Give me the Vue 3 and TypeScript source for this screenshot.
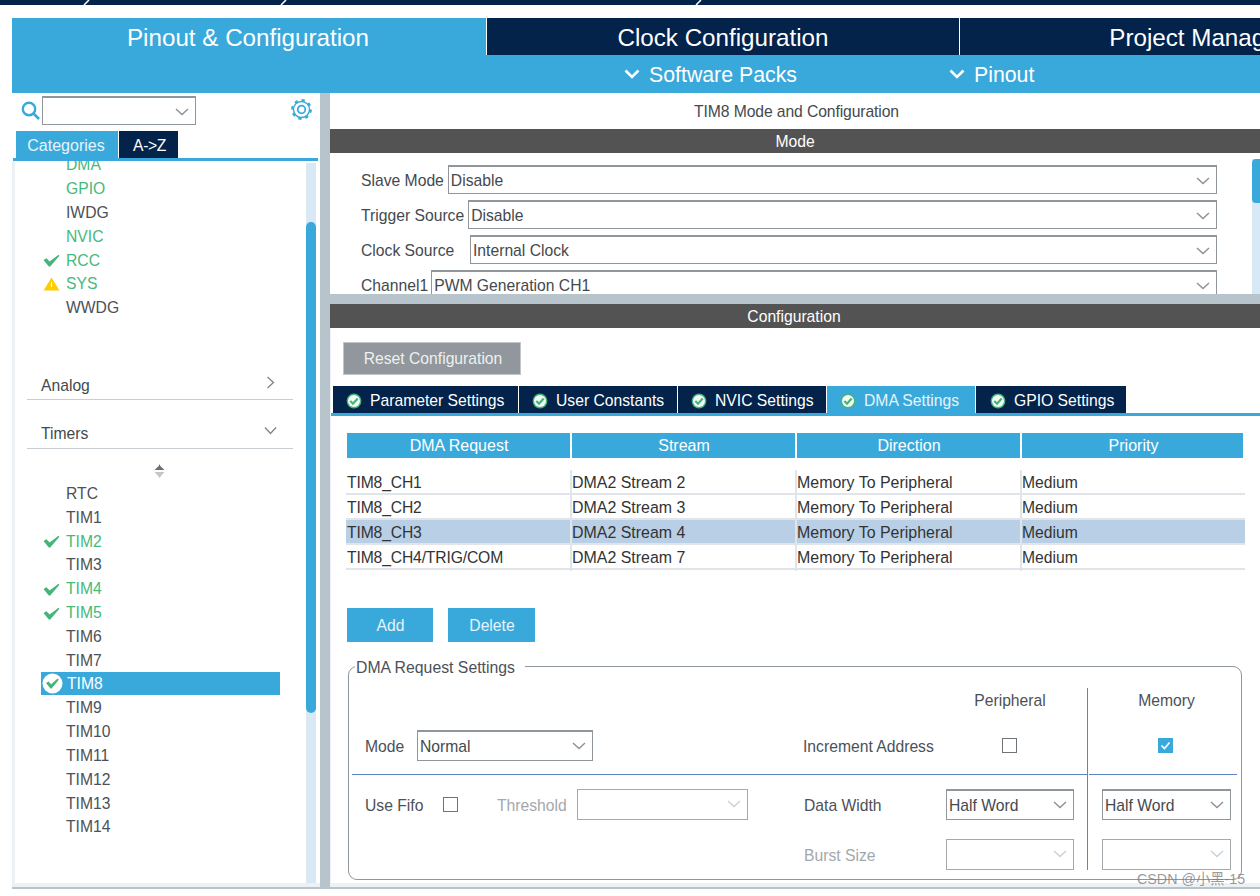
<script setup lang="ts">
interface Item { name: string; state?: 'ok' | 'warn' | 'sel'; green?: boolean }
const systemItems: Item[] = [
  { name: 'DMA', green: true }, { name: 'GPIO', green: true }, { name: 'IWDG' },
  { name: 'NVIC', green: true }, { name: 'RCC', green: true, state: 'ok' },
  { name: 'SYS', green: true, state: 'warn' }, { name: 'WWDG' }
]
const timerItems: Item[] = [
  { name: 'RTC' }, { name: 'TIM1' }, { name: 'TIM2', green: true, state: 'ok' }, { name: 'TIM3' },
  { name: 'TIM4', green: true, state: 'ok' }, { name: 'TIM5', green: true, state: 'ok' },
  { name: 'TIM6' }, { name: 'TIM7' }, { name: 'TIM8', state: 'sel' }, { name: 'TIM9' },
  { name: 'TIM10' }, { name: 'TIM11' }, { name: 'TIM12' }, { name: 'TIM13' }, { name: 'TIM14' }
]
const modeRows = [
  { label: 'Slave Mode', value: 'Disable', cls: '' },
  { label: 'Trigger Source', value: 'Disable', cls: '' },
  { label: 'Clock Source', value: 'Internal Clock', cls: 'wide' },
  { label: 'Channel1', value: 'PWM Generation CH1', cls: 'tight' }
]
const configTabs = [
  { name: 'Parameter Settings', w: 185 }, { name: 'User Constants', w: 158 },
  { name: 'NVIC Settings', w: 148 }, { name: 'DMA Settings', w: 148, active: true },
  { name: 'GPIO Settings', w: 150 }
]
const dmaRows = [
  { req: 'TIM8_CH1', stream: 'DMA2 Stream 2' },
  { req: 'TIM8_CH2', stream: 'DMA2 Stream 3' },
  { req: 'TIM8_CH3', stream: 'DMA2 Stream 4', selected: true },
  { req: 'TIM8_CH4/TRIG/COM', stream: 'DMA2 Stream 7' }
]
</script>

<template>
  <div class="page">
    <div class="crumbs">
      <svg class="crumb c1" width="8" height="5" viewBox="0 0 8 5"><path d="M1 5 L6 0" stroke="#fff" stroke-width="1.5" /></svg>
      <svg class="crumb c2" width="8" height="5" viewBox="0 0 8 5"><path d="M1 5 L6 0" stroke="#fff" stroke-width="1.5" /></svg>
      <svg class="crumb c3" width="8" height="5" viewBox="0 0 8 5"><path d="M1 5 L6 0" stroke="#fff" stroke-width="1.5" /></svg>
    </div>

    <div class="shell">
      <div class="main-tabs">
        <div class="main-tab active">Pinout &amp; Configuration</div>
        <div class="main-tab">Clock Configuration</div>
        <div class="main-tab">Project Manager</div>
      </div>
      <div class="sub-band">
        <div class="sub-item first">
          <svg width="16" height="10" viewBox="0 0 16 10"><path d="M1.5 1.5 L8 8 L14.5 1.5" fill="none" stroke="#fff" stroke-width="2.6" /></svg>
          <span>Software Packs</span>
        </div>
        <div class="sub-item second">
          <svg width="16" height="10" viewBox="0 0 16 10"><path d="M1.5 1.5 L8 8 L14.5 1.5" fill="none" stroke="#fff" stroke-width="2.6" /></svg>
          <span>Pinout</span>
        </div>
      </div>

      <div class="workspace">
        <aside class="sidebar">
          <div class="search-row">
            <svg class="search-ico" width="19" height="19" viewBox="0 0 19 19">
              <circle cx="8" cy="8" r="6.2" fill="none" stroke="#39a9dc" stroke-width="2.4" />
              <path d="M12.5 12.5 L18 18" stroke="#39a9dc" stroke-width="2.6" />
            </svg>
            <div class="select search-select">
              <svg class="chev" width="14" height="8" viewBox="0 0 14 8"><path d="M1 1 L7 6.5 L13 1" fill="none" stroke="#8b9196" stroke-width="1.4" /></svg>
            </div>
            <svg class="gear" width="21" height="21" viewBox="0 0 21 21">
              <circle cx="10.5" cy="10.5" r="8" fill="none" stroke="#39a9dc" stroke-width="1.4" />
              <circle cx="10.5" cy="10.5" r="9.2" fill="none" stroke="#39a9dc" stroke-width="2.4" stroke-dasharray="3.2 4" />
              <circle cx="10.5" cy="10.5" r="3.8" fill="none" stroke="#39a9dc" stroke-width="1.8" />
            </svg>
          </div>
          <div class="side-tabs">
            <div class="side-tab on">Categories</div>
            <div class="side-tab az">A-&gt;Z</div>
          </div>
          <div class="side-body">
            <div class="side-list">
              <div class="items first-items">
                <div v-for="it in systemItems" :key="it.name" class="item" :class="{ green: it.green }">
                  <span class="slot">
                    <svg v-if="it.state === 'ok'" width="17" height="13" viewBox="0 0 17 13"><path d="M0.5 6 L3.5 4.3 L6.6 7.4 L15.6 0.8 L16.4 1.8 L7.2 12.6 L5.8 12.6 Z" fill="#46b478" /></svg>
                    <svg v-if="it.state === 'warn'" width="17" height="14" viewBox="0 0 17 14">
                      <path d="M8.5 0.5 L16.5 13.5 L0.5 13.5 Z" fill="#ffcc00" />
                      <path d="M8.5 5 V10" stroke="#fff" stroke-width="1.2" />
                    </svg>
                  </span>
                  <span class="txt">{{ it.name }}</span>
                </div>
              </div>
              <div class="section analog">
                <span>Analog</span>
                <svg width="9" height="13" viewBox="0 0 9 13"><path d="M1.5 1 L7.5 6.5 L1.5 12" fill="none" stroke="#7d8388" stroke-width="1.3" /></svg>
              </div>
              <div class="section timers">
                <span>Timers</span>
                <svg width="13" height="9" viewBox="0 0 13 9"><path d="M1 1.5 L6.5 7.5 L12 1.5" fill="none" stroke="#7d8388" stroke-width="1.3" /></svg>
              </div>
              <div class="sort">
                <svg width="11" height="14" viewBox="0 0 11 14">
                  <path d="M5.5 0 L6.3 2 L10.5 6 L0.5 6 L4.7 2 Z" fill="#6b6f72" />
                  <path d="M0.5 8 L10.5 8 L7 12 L5.5 14 L4 12 Z" fill="#c4c6c8" />
                </svg>
              </div>
              <div class="items">
                <div v-for="it in timerItems" :key="it.name" class="item" :class="{ green: it.green, sel: it.state === 'sel' }">
                  <span class="slot">
                    <svg v-if="it.state === 'ok'" width="17" height="13" viewBox="0 0 17 13"><path d="M0.5 6 L3.5 4.3 L6.6 7.4 L15.6 0.8 L16.4 1.8 L7.2 12.6 L5.8 12.6 Z" fill="#46b478" /></svg>
                    <svg v-if="it.state === 'sel'" class="sel-ico" width="21" height="21" viewBox="0 0 21 21">
                      <circle cx="10.5" cy="10.5" r="10" fill="#fff" />
                      <path d="M4 10 L6.6 8.6 L9.2 11.2 L15.6 5.6 L16.8 6.8 L9.6 15.6 L8.4 15.6 Z" fill="#46b478" />
                    </svg>
                  </span>
                  <span class="txt">{{ it.name }}</span>
                </div>
              </div>
            </div>
            <div class="side-track"><div class="side-thumb"></div></div>
          </div>
        </aside>

        <div class="v-split"></div>

        <section class="right">
          <div class="title">TIM8 Mode and Configuration</div>
          <div class="bar mode-bar">Mode</div>
          <div class="mode-panel">
            <div class="mode-rows">
              <div v-for="r in modeRows" :key="r.label" class="mode-row">
                <label :class="r.cls">{{ r.label }}</label>
                <div class="select grow">
                  <span>{{ r.value }}</span>
                  <svg class="chev" width="14" height="8" viewBox="0 0 14 8"><path d="M1 1 L7 6.5 L13 1" fill="none" stroke="#8b9196" stroke-width="1.4" /></svg>
                </div>
              </div>
            </div>
            <div class="mode-track"><div class="mode-thumb"></div></div>
          </div>
          <div class="h-split"></div>
          <div class="bar config-bar">Configuration</div>

          <div class="config">
            <button class="reset">Reset Configuration</button>
            <div class="cfg-tabs">
              <div v-for="t in configTabs" :key="t.name" class="cfg-tab" :class="{ on: t.active }" :style="{ width: t.w + 'px' }">
                <svg width="16" height="16" viewBox="0 0 16 16">
                  <circle cx="8" cy="8" r="7.4" fill="#46b478" />
                  <circle cx="8" cy="8" r="6" fill="#f4fbf7" />
                  <path d="M4.3 8 L7 10.7 L11.7 5.4" fill="none" stroke="#46b478" stroke-width="2.2" />
                </svg>
                <span>{{ t.name }}</span>
              </div>
            </div>

            <div class="table">
              <div class="thead">
                <div>DMA Request</div><div>Stream</div><div>Direction</div><div>Priority</div>
              </div>
              <div v-for="r in dmaRows" :key="r.req" class="trow" :class="{ selected: r.selected }">
                <div class="c-req">{{ r.req }}</div>
                <div class="c-wide">{{ r.stream }}</div>
                <div class="c-wide">Memory To Peripheral</div>
                <div>Medium</div>
              </div>
            </div>

            <div class="actions">
              <button class="act">Add</button>
              <button class="act">Delete</button>
            </div>

            <fieldset class="fs">
              <legend>DMA Request Settings</legend>
              <div class="fs-cols">
                <div class="fs-left">
                  <div class="fr head-row">
                    <span class="left-part"></span>
                    <span class="lab2"></span>
                    <span class="ctl center">Peripheral</span>
                  </div>
                  <div class="fr mode-line">
                    <span class="left-part">
                      <span class="fl-mode t">Mode</span>
                      <div class="select s-mode">
                        <span>Normal</span>
                        <svg class="chev" width="14" height="8" viewBox="0 0 14 8"><path d="M1 1 L7 6.5 L13 1" fill="none" stroke="#8b9196" stroke-width="1.4" /></svg>
                      </div>
                    </span>
                    <span class="lab2 t">Increment Address</span>
                    <span class="ctl center"><i class="cb"></i></span>
                  </div>
                  <div class="rule"></div>
                  <div class="fr data-line">
                    <span class="left-part">
                      <span class="fl-fifo t">Use Fifo</span>
                      <i class="cb fifo-cb"></i>
                      <span class="fl-thr muted t">Threshold</span>
                      <div class="select s-thr off">
                        <svg class="chev" width="14" height="8" viewBox="0 0 14 8"><path d="M1 1 L7 6.5 L13 1" fill="none" stroke="#ccd0d3" stroke-width="1.4" /></svg>
                      </div>
                    </span>
                    <span class="lab2 shift t">Data Width</span>
                    <div class="select ctl">
                      <span>Half Word</span>
                      <svg class="chev" width="14" height="8" viewBox="0 0 14 8"><path d="M1 1 L7 6.5 L13 1" fill="none" stroke="#8b9196" stroke-width="1.4" /></svg>
                    </div>
                  </div>
                  <div class="fr burst-line">
                    <span class="left-part"></span>
                    <span class="lab2 shift muted t">Burst Size</span>
                    <div class="select ctl off">
                      <svg class="chev" width="14" height="8" viewBox="0 0 14 8"><path d="M1 1 L7 6.5 L13 1" fill="none" stroke="#ccd0d3" stroke-width="1.4" /></svg>
                    </div>
                  </div>
                </div>
                <div class="fs-right">
                  <div class="fr head-row"><span class="ctl center">Memory</span></div>
                  <div class="fr mode-line">
                    <span class="ctl center">
                      <i class="cb checked">
                        <svg width="15" height="15" viewBox="0 0 15 15"><path d="M3.5 7.5 L6.5 10.5 L11.5 4.5" fill="none" stroke="#fff" stroke-width="1.6" /></svg>
                      </i>
                    </span>
                  </div>
                  <div class="rule"></div>
                  <div class="fr data-line">
                    <div class="select ctl">
                      <span>Half Word</span>
                      <svg class="chev" width="14" height="8" viewBox="0 0 14 8"><path d="M1 1 L7 6.5 L13 1" fill="none" stroke="#8b9196" stroke-width="1.4" /></svg>
                    </div>
                  </div>
                  <div class="fr burst-line">
                    <div class="select ctl off">
                      <svg class="chev" width="14" height="8" viewBox="0 0 14 8"><path d="M1 1 L7 6.5 L13 1" fill="none" stroke="#ccd0d3" stroke-width="1.4" /></svg>
                    </div>
                  </div>
                </div>
              </div>
            </fieldset>
          </div>
        </section>
      </div>
      <div class="foot"></div>
    </div>
    <div class="watermark">CSDN @小黑-15</div>
  </div>
</template>

<style>
html, body { margin: 0; background: #fff; }
</style>

<style scoped>
.page {
  position: relative;
  width: 1260px;
  height: 896px;
  overflow: hidden;
  background: #fff;
  font-family: "Liberation Sans", Arial, sans-serif;
  font-size: 15.7px;
  color: #4c5157;
}
.crumbs { height: 5px; background: #03234b; display: flex; }
.crumb { display: block; }
.c1 { margin-left: 83px; }
.c2 { margin-left: 189px; }
.c3 { margin-left: 407px; }

.shell { margin: 13px 0 0 12px; }
.main-tabs { display: flex; height: 37px; width: 1248px; overflow: hidden; }
.main-tab {
  flex: 0 0 472px;
  background: #03234b;
  color: #fff;
  font-size: 24.2px;
  line-height: 40px;
  text-align: center;
  margin-right: 1px;
}
.main-tab:first-child { flex-basis: 474px; padding-right: 2px; box-sizing: border-box; margin-right: 1px; }
.main-tab:last-child { flex-basis: 476px; margin-right: 0; }
.main-tab.active { background: #39a9dc; }
.sub-band {
  height: 38px;
  background: #39a9dc;
  display: flex;
  align-items: center;
  color: #fff;
  font-size: 21.3px;
}
.sub-item { display: flex; align-items: center; gap: 9px; }
.sub-item span { padding-top: 2px; }
.sub-item.first { margin-left: 612px; }
.sub-item.second { margin-left: 152px; }

.workspace { display: flex; height: 790px; }
.sidebar { width: 308px; display: flex; flex-direction: column; }
.search-row { height: 38px; display: flex; align-items: flex-start; }
.search-ico { margin: 8px 2px 0 9px; }
.select {
  position: relative;
  box-sizing: border-box;
  display: flex;
  align-items: center;
  height: 29px;
  padding-left: 2px;
  border: 1px solid #8f979c;
  border-top-width: 2px;
  color: #44494e;
  background: #fff;
}
.select > span { padding-top: 2px; }
.search-select { width: 154px; margin-top: 3px; }
.chev { position: absolute; right: 6px; top: 10px; }
.gear { margin: 6px 0 0 95px; }
.side-tabs { height: 27px; display: flex; gap: 1px; border-bottom: 3px solid #39a9dc; margin: 0 2px 0 1px; padding-left: 3px; }
.side-tab { width: 59px; background: #03234b; color: #fff; text-align: center; line-height: 30px; }
.side-tab.az { letter-spacing: -0.4px; padding-left: 2px; box-sizing: border-box; }
.side-tab.on { width: 102px; background: #39a9dc; color: #e6f4fb; font-size: 16px; padding-right: 2px; box-sizing: border-box; }

.side-body { flex: 1; display: flex; border-left: 3px solid #eef1f4; min-height: 0; }
.side-list { width: 291px; overflow: hidden; }
.items.first-items { margin-top: -7.7px; }
.item { height: 23.83px; display: flex; align-items: center; margin-left: 26px; width: 239px; color: #4c5157; }
.item.green { color: #46b97c; }
.item.sel { background: #39a9dc; color: #fff; height: 23px; margin-top: -0.5px; margin-bottom: 1.33px; }
.item.sel .txt { padding-left: 1px; }
.slot { flex: 0 0 25px; display: flex; align-items: center; padding-left: 2px; box-sizing: border-box; }
.sel-ico { margin-left: -1px; }
.section {
  display: flex;
  align-items: center;
  justify-content: space-between;
  margin-left: 12px;
  width: 266px;
  height: 25px;
  box-sizing: border-box;
  padding: 0 18px 2px 14px;
  border-bottom: 1px solid #c9ced2;
  color: #44494e;
}
.section svg { margin-top: -6px; }
.analog { margin-top: 54.7px; }
.timers { margin-top: 24px; padding: 0 16px 4px 14px; }
.sort { height: 33.2px; padding-left: 139px; padding-top: 15px; box-sizing: border-box; }
.sort svg { display: block; }
.side-track { width: 10px; height: 720px; margin: 2px 4px 0 0; background: #d8e8f5; }
.side-thumb { width: 10px; height: 491px; margin-top: 59px; background: #39a9dc; border-radius: 5px; }

.v-split { width: 10px; background: #b8c4cb; height: 796px; }
.right { width: 930px; display: flex; flex-direction: column; overflow: hidden; }
.title { height: 36px; line-height: 38px; text-align: center; padding-left: 3px; box-sizing: border-box; color: #44494e; letter-spacing: -0.1px; }
.bar { height: 24px; background: #535353; color: #fff; line-height: 25px; text-align: center; }
.config-bar { padding-right: 2px; box-sizing: border-box; }
.mode-panel { height: 141px; display: flex; overflow: hidden; }
.mode-rows { flex: 1; padding: 12px 35px 0 31px; }
.mode-row { display: flex; align-items: center; height: 29px; margin-bottom: 6px; gap: 4px; }
.mode-row label { color: #44494e; white-space: nowrap; padding-top: 2px; }
.mode-row label.wide { width: 105px; }
.mode-row label.tight { margin-right: -1px; }
.grow { flex: 1; }
.mode-track { width: 8px; margin-top: 6px; background: #d8e8f5; }
.mode-thumb { height: 44px; background: #39a9dc; border-radius: 4px 0 0 4px; }
.h-split { height: 10px; background: #b8c4cb; }

.config { flex: 1; border-left: 1px solid #eef1f4; min-height: 0; }
.reset {
  display: block;
  box-sizing: border-box;
  width: 178px;
  height: 33px;
  margin: 14px 0 0 12px;
  border: 1px solid #c0c5c9;
  background: #91979c;
  color: #eef0f1;
  font: inherit;
  padding: 0 0 0 2px;
}
.cfg-tabs { display: flex; gap: 1px; height: 27px; margin-top: 11px; padding-left: 2px; border-bottom: 3px solid #39a9dc; }
.cfg-tab {
  box-sizing: border-box;
  background: #03234b;
  color: #fff;
  display: flex;
  align-items: center;
  gap: 8px;
  padding: 2px 0 0 13px;
}
.cfg-tab:last-child { padding-left: 14px; }
.cfg-tab.on { background: #39a9dc; color: #e6f4fb; }
.table { margin: 17px 0 0 16px; width: 898px; color: #333; }
.thead { display: grid; grid-template-columns: 223px 223px 223px 221px; gap: 2px; height: 24px; margin-bottom: 13px; font-size: 16px; }
.thead div { background: #39a9dc; color: #fff; text-align: center; line-height: 25px; padding-left: 1px; box-sizing: border-box; }
.thead div:last-child { padding-left: 2px; }
.trow { display: grid; grid-template-columns: 225px 225px 225px 222px; height: 25px; margin-left: -1px; padding-left: 1px; box-shadow: inset 0 -2px 0 #e1e5ea; }
.trow div { line-height: 26px; box-shadow: inset -2px 0 0 #e1e5ea; white-space: nowrap; }
.trow div:last-child { box-shadow: none; }
.trow .c-req { letter-spacing: -0.15px; }
.trow .c-wide { font-size: 15.95px; }
.trow.selected { background: #b8cfe6; }
.actions { display: flex; gap: 15px; margin: 38px 0 0 16px; }
.act { width: 86px; height: 34px; border: 0; padding: 2px 0 0 1px; background: #39a9dc; color: #e6f4fb; font: inherit; }
.act + .act { width: 87px; }

.fs {
  box-sizing: border-box;
  margin: 13px 0 0 17px;
  width: 894px;
  height: 225px;
  padding: 11px 4px 0 3px;
  border: 1px solid #8f979c;
  border-radius: 9px;
  min-width: 0;
}
legend { box-sizing: border-box; padding: 3px 10px 0 1px; margin-left: 3px; line-height: 19px; color: #4c5157; height: 22px; font-size: 15.8px; }
.fs-cols { display: flex; }
.fs-left { flex: 0 0 735px; }
.fs-right { flex: 0 0 150px; box-sizing: border-box; border-left: 1px solid #5d84c4; height: 182px; padding-left: 1px; }
.fr { display: flex; align-items: center; padding-left: 13px; }
.left-part { flex: 0 0 438px; display: flex; align-items: center; }
.lab2 { flex: 0 0 143px; color: #4c5157; }
.shift { padding-left: 1px; box-sizing: border-box; }
.t { padding-top: 2px; }
.ctl { box-sizing: border-box; flex: 0 0 128px; width: 128px; height: 31px; }
.fs-right .ctl { flex-basis: 129px; width: 129px; }
.center { display: flex; align-items: center; justify-content: center; }
.head-row { height: 25px; }
.mode-line { margin-top: 17px; height: 31px; }
.rule { height: 1px; background: #5d84c4; margin-top: 13px; }
.data-line { margin-top: 14px; height: 31px; }
.burst-line { margin-top: 19px; height: 31px; }
.select.ctl { height: 31px; }
.fl-mode { width: 52px; }
.s-mode { width: 176px; height: 31px; }
.fl-fifo { width: 78px; }
.fifo-cb { margin-right: 39px; }
.fl-thr { width: 80px; }
.s-thr { width: 171px; height: 31px; }
.muted { color: #a3a8ac; }
.select.off { border-color: #a4aaae; border-top-width: 1px; }
.cb { display: block; box-sizing: border-box; width: 15px; height: 15px; border: 1.5px solid #6f7478; background: #fff; margin-left: -1px; }
.cb.fifo-cb { margin-left: 0; }
.cb.checked { border: 0; background: #39a9dc; margin-left: -2px; }
.cb.checked svg { display: block; }

.watermark {
  position: absolute;
  left: 1137px;
  top: 871px;
  font-family: "Liberation Sans", "Noto Sans CJK SC", sans-serif;
  font-size: 14.3px;
  line-height: 16px;
  color: rgba(120, 120, 120, 0.75);
  white-space: nowrap;
}
.foot { height: 6px; border-bottom: 2px solid #b8c4cb; background: #eef1f4; box-sizing: border-box; }
</style>
